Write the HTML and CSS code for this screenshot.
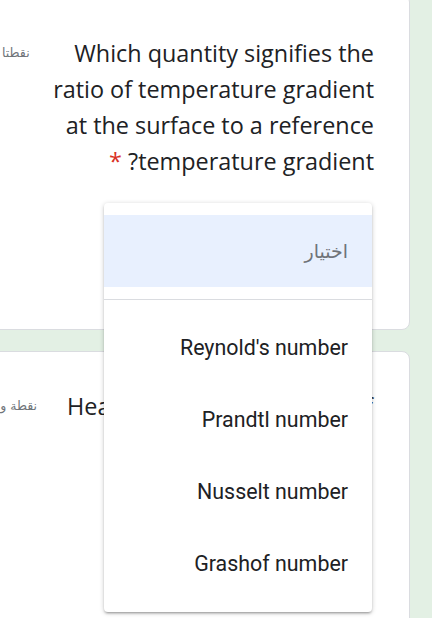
FILE: index.html
```html
<!DOCTYPE html>
<html lang="ar" dir="rtl">
<head>
<meta charset="utf-8">
<link rel="stylesheet" href="styles.css">
</head>
<body>
<div class="page">
  <div class="card card-first">
    <div class="q-head">
      <div class="q-title">Which quantity signifies the ratio of temperature gradient at the surface to a reference temperature gradient? <span class="req">*</span></div>
      <div class="q-points">نقطتا</div>
    </div>
  </div>
  <div class="card card-second">
    <div class="q-head">
      <div class="q-title q-title2">Heat transfer coefficient of convection?</div>
      <div class="q-points q-points2">نقطة واحدة</div>
    </div>
  </div>
</div>
<div class="menu" role="listbox">
  <div class="menu-item placeholder">اختيار</div>
  <div class="menu-sep"></div>
  <div class="menu-item">Reynold's number</div>
  <div class="menu-item">Prandtl number</div>
  <div class="menu-item">Nusselt number</div>
  <div class="menu-item">Grashof number</div>
</div>
</body>
</html>
```
FILE: styles.css
```css
html, body {
  margin: 0;
  padding: 0;
}
body {
  background: #e3f0e4;
  width: 432px;
  height: 618px;
  overflow: hidden;
  position: relative;
  font-family: Roboto, "DejaVu Sans", sans-serif;
}
.page {
  direction: ltr;
  display: flex;
  flex-direction: column;
  gap: 21px;
  padding-right: 22px;
  margin-top: -6px;
}
.card {
  direction: rtl;
  background: #fff;
  border: 1px solid #dadce0;
  border-radius: 8px;
  margin-left: -10px;
  box-sizing: border-box;
}
.card-first {
  height: 336px;
  padding: 40px 35px 0 11px;
}
.card-second {
  height: 300px;
  padding: 36px 36px 0 10px;
}
.q-head {
  display: flex;
  justify-content: space-between;
  align-items: flex-start;
}
.q-title {
  width: 327px;
  font-family: "Open Sans", sans-serif;
  font-size: 23.4px;
  line-height: 36px;
  color: #202124;
}
.q-title2 {
  text-align: justify;
  width: 306px;
}
.req {
  color: #d93025;
}
.q-points {
  font-family: "DejaVu Sans", sans-serif;
  font-size: 12.5px;
  line-height: 36px;
  color: #70757a;
  white-space: nowrap;
}
.q-points2 {
  margin-left: -25px;
}
.menu {
  position: absolute;
  left: 104px;
  top: 203px;
  width: 268px;
  height: 409px;
  box-sizing: border-box;
  padding-top: 12px;
  background: #fff;
  border-radius: 4px;
  box-shadow: 0 2px 2px rgba(0,0,0,.14), 0 3px 1px -2px rgba(0,0,0,.12), 0 1px 5px rgba(0,0,0,.2);
  direction: rtl;
}
.menu-item {
  height: 72px;
  display: flex;
  align-items: center;
  padding: 0 24px;
  font-size: 21.4px;
  color: #202124;
}
.menu-item.placeholder {
  background: #e8f0fe;
  color: #6f7378;
  font-family: "DejaVu Sans", sans-serif;
  font-size: 19px;
}
.menu-sep {
  height: 1px;
  background: #dadce0;
  margin: 12px 0 11px;
}
```
